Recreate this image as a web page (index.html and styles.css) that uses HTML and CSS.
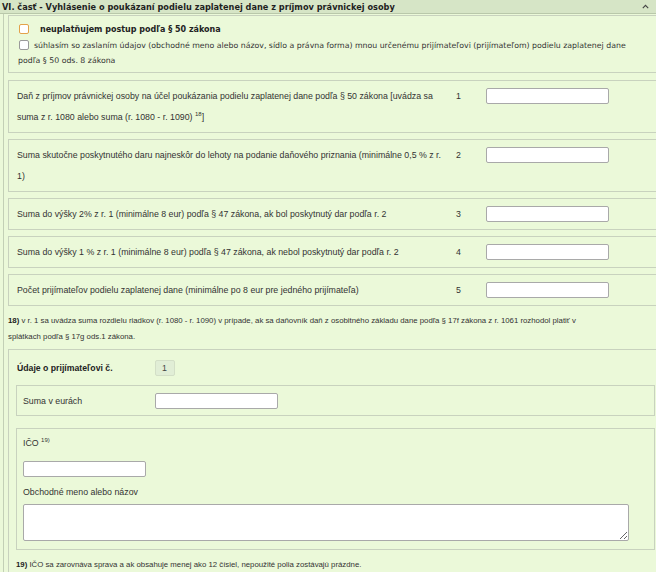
FILE: index.html
```html
<!DOCTYPE html>
<html lang="sk">
<head>
<meta charset="utf-8">
<title>VI. časť</title>
<link rel="stylesheet" href="styles.css">
</head>
<body>
<div class="hdr">
  <span class="hdr-title">VI. časť - Vyhlásenie o poukázaní podielu zaplatenej dane z príjmov právnickej osoby</span>
  <svg class="caret" width="7" height="5" viewBox="0 0 7 5"><path d="M0.8 4.2 L3.5 1.3 L6.2 4.2" fill="none" stroke="#444" stroke-width="1.1"/></svg>
</div>
<div class="content">
  <div class="box chk">
    <div class="chk-line1"><span class="cb cb-orange"></span><b>neuplatňujem postup podľa § 50 zákona</b></div>
    <div class="chk-line2"><span class="cb cb-gray"></span>súhlasím so zaslaním údajov (obchodné meno alebo názov, sídlo a právna forma) mnou určenému prijímateľovi (prijímateľom) podielu zaplatenej dane podľa § 50 ods. 8 zákona</div>
  </div>

  <div class="box row">
    <div class="row-text">Daň z príjmov právnickej osoby na účel poukázania podielu zaplatenej dane podľa § 50 zákona [uvádza sa suma z r. 1080 alebo suma (r. 1080 - r. 1090) <sup>18</sup>]</div>
    <div class="row-num">1</div>
    <input class="inp" type="text">
  </div>
  <div class="box row">
    <div class="row-text">Suma skutočne poskytnutého daru najneskôr do lehoty na podanie daňového priznania (minimálne 0,5 % z r. 1)</div>
    <div class="row-num">2</div>
    <input class="inp" type="text">
  </div>
  <div class="box row">
    <div class="row-text">Suma do výšky 2% z r. 1 (minimálne 8 eur) podľa § 47 zákona, ak bol poskytnutý dar podľa r. 2</div>
    <div class="row-num">3</div>
    <input class="inp" type="text">
  </div>
  <div class="box row">
    <div class="row-text">Suma do výšky 1 % z r. 1 (minimálne 8 eur) podľa § 47 zákona, ak nebol poskytnutý dar podľa r. 2</div>
    <div class="row-num">4</div>
    <input class="inp" type="text">
  </div>
  <div class="box row">
    <div class="row-text">Počet prijímateľov podielu zaplatenej dane (minimálne po 8 eur pre jedného prijímateľa)</div>
    <div class="row-num">5</div>
    <input class="inp" type="text">
  </div>

  <p class="note note18"><b>18)</b> v r. 1 sa uvádza suma rozdielu riadkov (r. 1080 - r. 1090) v prípade, ak sa daňovník daň z osobitného základu dane podľa § 17f zákona z r. 1061 rozhodol platiť v splátkach podľa § 17g ods.1 zákona.</p>

  <div class="box rcp">
    <div class="rcp-head">
      <b class="rcp-label">Údaje o prijímateľovi č.</b>
      <span class="inp-ro">1</span>
    </div>
    <div class="box inner suma">
      <span class="suma-label">Suma v eurách</span>
      <input class="inp" type="text">
    </div>
    <div class="box inner ico">
      <div class="lbl">IČO <sup>19)</sup></div>
      <input class="inp ico-inp" type="text">
      <div class="lbl lbl-name">Obchodné meno alebo názov</div>
      <textarea class="ta"></textarea>
    </div>
    <p class="note note19"><b>19)</b> IČO sa zarovnáva sprava a ak obsahuje menej ako 12 čísiel, nepoužité polia zostávajú prázdne.</p>
  </div>
</div>
</body>
</html>
```

FILE: styles.css
```css
* { box-sizing: border-box; }
html, body { margin: 0; padding: 0; }
body {
  width: 656px;
  height: 572px;
  overflow: hidden;
  background: #ebf9d9;
  font-family: "Liberation Sans", Arial, sans-serif;
  color: #333;
}

.hdr {
  height: 14px;
  background: #d6e5c6;
  border-bottom: 1px solid #b9c8aa;
  display: flex;
  align-items: center;
  justify-content: space-between;
  padding: 0 7px 0 2px;
  font-family: "DejaVu Sans", Verdana, sans-serif;
  font-weight: bold;
  font-size: 8.2px;
  color: #1f1f1f;
  white-space: nowrap;
}
.caret { display: block; }

.content {
  margin-left: 3px;
  border-left: 1px solid #c3d0b6;
  width: 662px;
  padding: 1px 0 20px 4px;
}

.box {
  border: 1px solid #c8d2be;
}

/* checkbox block */
.chk {
  padding: 6px 8px 4px 9px;
  font-family: "DejaVu Sans", Verdana, sans-serif;
  font-size: 7.8px;
  color: #333;
}
.chk-line1 {
  display: flex;
  align-items: center;
  height: 14px;
  margin-bottom: 2px;
}
.chk-line1 b { font-size: 8px; color: #222; }
.chk-line2 {
  line-height: 15px;
  width: 625px;
}
.cb {
  display: inline-block;
  width: 10px;
  height: 10px;
  background: #fff;
  border-radius: 2px;
  vertical-align: -2px;
}
.cb-orange {
  border: 1.5px solid #e3a24a;
  margin: 0 11px 0 1px;
}
.cb-gray {
  border: 1px solid #9a9a9a;
  margin: 0 5px 0 1px;
}

/* rows */
.row {
  display: flex;
  align-items: flex-start;
  margin-top: 6px;
  padding: 5px 8px 4px 8px;
  font-size: 8.8px;
  line-height: 21px;
}
.chk + .row { margin-top: 7px; }
.row-text { width: 426px; }
.row-num { width: 43px; padding-left: 13px; }
.row sup { font-size: 6px; line-height: 0; vertical-align: 4px; }

.inp {
  display: block;
  width: 123px;
  height: 16px;
  margin: 2px 0 0;
  padding: 0;
  background: #fff;
  border: 1px solid #a9a9a9;
  border-radius: 2px;
  outline: none;
}

/* notes */
.note {
  margin: 7px 0 0;
  font-size: 7.8px;
  line-height: 16px;
  color: #333;
}
.note b { color: #222; }
.note18 { width: 590px; }

/* recipient */
.rcp {
  margin-top: 4px;
  padding: 7px 7px 0 7px;
}
.rcp-head {
  display: flex;
  align-items: center;
  height: 22px;
  padding-left: 1px;
}
.rcp-label {
  width: 138px;
  font-size: 8.7px;
  color: #222;
}
.inp-ro {
  width: 20px;
  height: 16px;
  background: #e1eed6;
  border: 1px solid #d3dfc7;
  border-radius: 2px;
  font-size: 8.8px;
  line-height: 14px;
  padding-left: 6px;
  color: #444;
}
.inner {
  width: 639px;
}
.suma {
  display: flex;
  align-items: center;
  margin-top: 6px;
  padding: 6px 6px;
  height: 31px;
  font-size: 8.8px;
}
.suma-label { width: 132px; }
.suma .inp { margin: 0; }

.ico {
  margin-top: 12px;
  padding: 6px 6px 8px 6px;
  font-size: 8.8px;
}
.lbl { height: 16px; line-height: 16px; }
.lbl sup { font-size: 6px; line-height: 0; vertical-align: 4px; }
.ico-inp { margin-top: 10px; }
.lbl-name { margin-top: 7px; }
.ta {
  display: block;
  margin-top: 4px;
  width: 606px;
  height: 37px;
  background: #fff;
  border: 1px solid #a9a9a9;
  border-radius: 2px;
  padding: 0;
  font-size: 8px;
  resize: both;
  outline: none;
}
.note19 { margin-top: 4px; line-height: 22px; }
```
